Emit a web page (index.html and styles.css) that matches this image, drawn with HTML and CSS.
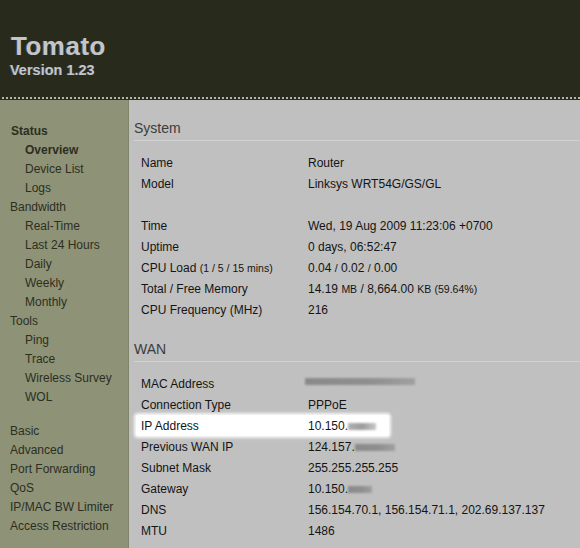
FILE: index.html
```html
<!DOCTYPE html>
<html>
<head>
<meta charset="utf-8">
<title>Tomato</title>
<link rel="stylesheet" href="styles.css">
</head>
<body>
<div class="page">
  <header class="header">
    <div class="title">Tomato</div>
    <div class="version">Version 1.23</div>
  </header>
  <div class="dots"></div>
  <div class="main">
    <nav class="nav">
      <div class="nav-item top bold">Status</div>
      <div class="nav-item sub bold">Overview</div>
      <div class="nav-item sub">Device List</div>
      <div class="nav-item sub">Logs</div>
      <div class="nav-item top">Bandwidth</div>
      <div class="nav-item sub">Real-Time</div>
      <div class="nav-item sub">Last 24 Hours</div>
      <div class="nav-item sub">Daily</div>
      <div class="nav-item sub">Weekly</div>
      <div class="nav-item sub">Monthly</div>
      <div class="nav-item top">Tools</div>
      <div class="nav-item sub">Ping</div>
      <div class="nav-item sub">Trace</div>
      <div class="nav-item sub">Wireless Survey</div>
      <div class="nav-item sub">WOL</div>
      <div class="nav-item top gap">Basic</div>
      <div class="nav-item top">Advanced</div>
      <div class="nav-item top">Port Forwarding</div>
      <div class="nav-item top">QoS</div>
      <div class="nav-item top">IP/MAC BW Limiter</div>
      <div class="nav-item top">Access Restriction</div>
    </nav>
    <section class="content">
      <div class="section-title">System</div>
      <div class="rows">
        <div class="row"><div class="label">Name</div><div class="value">Router</div></div>
        <div class="row"><div class="label">Model</div><div class="value">Linksys WRT54G/GS/GL</div></div>
        <div class="row"></div>
        <div class="row"><div class="label">Time</div><div class="value">Wed, 19 Aug 2009 11:23:06 +0700</div></div>
        <div class="row"><div class="label">Uptime</div><div class="value">0 days, 06:52:47</div></div>
        <div class="row"><div class="label">CPU Load <small>(1 / 5 / 15 mins)</small></div><div class="value">0.04 <small>/</small> 0.02 <small>/</small> 0.00</div></div>
        <div class="row"><div class="label">Total / Free Memory</div><div class="value">14.19 <small>MB</small> / 8,664.00 <small>KB</small> <small>(59.64%)</small></div></div>
        <div class="row"><div class="label">CPU Frequency (MHz)</div><div class="value">216</div></div>
      </div>
      <div class="section-title wan">WAN</div>
      <div class="rows">
        <div class="row"><div class="label">MAC Address</div><div class="value"><span class="blur mac"></span></div></div>
        <div class="row"><div class="label">Connection Type</div><div class="value">PPPoE</div></div>
        <div class="row hl"><div class="label">IP Address</div><div class="value">10.150.<span class="blur ip"></span></div></div>
        <div class="row"><div class="label">Previous WAN IP</div><div class="value">124.157.<span class="blur prev"></span></div></div>
        <div class="row"><div class="label">Subnet Mask</div><div class="value">255.255.255.255</div></div>
        <div class="row"><div class="label">Gateway</div><div class="value">10.150.<span class="blur gw"></span></div></div>
        <div class="row"><div class="label">DNS</div><div class="value">156.154.70.1, 156.154.71.1, 202.69.137.137</div></div>
        <div class="row"><div class="label">MTU</div><div class="value">1486</div></div>
      </div>
    </section>
  </div>
</div>
</body>
</html>
```

FILE: styles.css
```css
html, body {
  margin: 0;
  padding: 0;
}
body {
  width: 580px;
  height: 548px;
  overflow: hidden;
  background: #c0c0c0;
  font-family: "Liberation Sans", Arial, sans-serif;
  font-size: 12px;
}
.page {
  width: 580px;
  height: 548px;
  display: flex;
  flex-direction: column;
}
.header {
  background: #282a1c;
  height: 97px;
  padding-left: 10px;
  box-sizing: border-box;
  padding-top: 32px;
  color: #c3c6c9;
  font-weight: bold;
}
.title {
  font-size: 26px;
  line-height: 29.5px;
  padding-left: 1px;
  letter-spacing: 0.5px;
  text-shadow: -1px 0 0 #3d4a5c;
}
.version {
  font-size: 14.5px;
  line-height: 17px;
  text-shadow: -1px 0 0 #3d4a5c;
}
.dots {
  height: 3px;
  background: repeating-linear-gradient(90deg, #282a1c 0 2px, #b4b5ab 2px 4px);
  background-size: 4px 2px;
  background-repeat: repeat-x;
  background-color: #282a1c;
}
.main {
  flex: 1;
  display: flex;
}
.nav {
  width: 128px;
  background: #8e9377;
  border-right: 1px solid #7f846a;
  padding-top: 22px;
  color: #2c2e22;
}
.nav-item {
  line-height: 19px;
  white-space: nowrap;
}
.nav-item.top {
  padding-left: 10px;
}
.nav-item.sub {
  padding-left: 25px;
}
.nav-item.bold {
  font-weight: bold;
}
.nav-item.top.bold {
  padding-left: 11px;
}
.nav-item.gap {
  margin-top: 15px;
}
.content {
  flex: 1;
  padding: 20px 0 0 5px;
  color: #141414;
}
.section-title {
  font-size: 14px;
  line-height: 17px;
  color: #3c3c3c;
  padding-bottom: 3px;
  border-bottom: 1px solid #d2d2d2;
  margin-bottom: 11px;
}
.section-title.wan {
  margin-top: 21px;
}
.row {
  display: flex;
  align-items: center;
  height: 21px;
  padding-left: 7px;
  white-space: nowrap;
}
.row.hl {
  margin-left: 2px;
  padding-left: 5px;
  width: 248px;
  background: #ffffff;
  box-shadow: 0 0 3px 2px rgba(255, 255, 255, 0.85);
  border-radius: 2px;
}
.label {
  width: 167px;
  flex: none;
}
.value {
  white-space: nowrap;
}
small {
  font-size: 10.5px;
}
.blur {
  display: inline-block;
  vertical-align: middle;
  height: 7px;
  background: linear-gradient(90deg, #8a8a8a, #8f8f8f 60%, #a0a0a0);
  filter: blur(1.2px);
}
.blur.mac {
  width: 110px;
  margin-left: -3px;
  margin-top: -6px;
}
.blur.ip {
  width: 28px;
  background: linear-gradient(90deg, #b0b0b0, #9c9c9c 50%, #c8c8c8);
}
.blur.prev {
  width: 40px;
}
.blur.gw {
  width: 24px;
}
```
